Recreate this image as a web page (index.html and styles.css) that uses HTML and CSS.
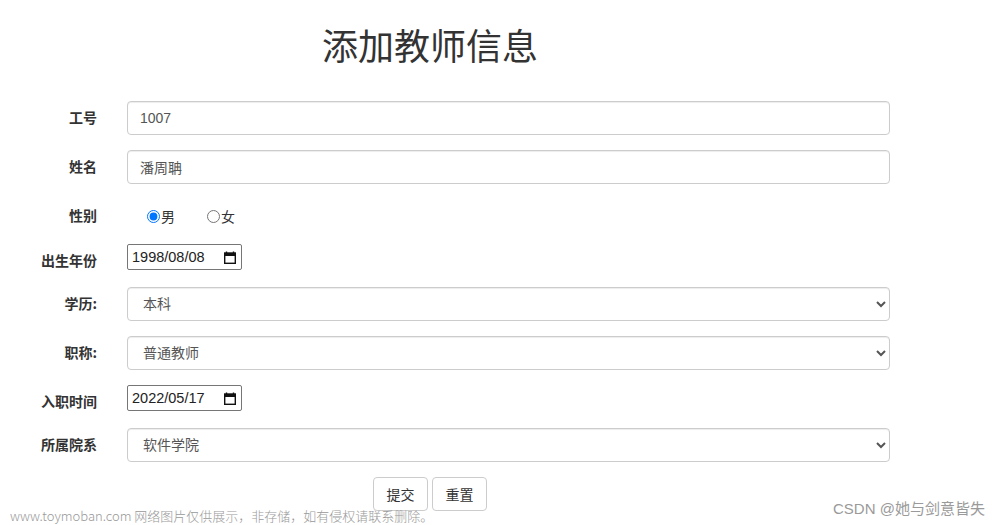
FILE: index.html
```html
<!DOCTYPE html>
<html lang="zh">
<head>
<meta charset="utf-8">
<title>添加教师信息</title>
<link rel="stylesheet" href="styles.css">
</head>
<body>
<div class="page">
  <h1 class="title">添加教师信息</h1>
  <form class="form">
    <div class="row">
      <label class="label">工号</label>
      <div class="control"><input class="text-input" type="text" value="1007"></div>
    </div>
    <div class="row">
      <label class="label">姓名</label>
      <div class="control"><input class="text-input" type="text" value="潘周聃"></div>
    </div>
    <div class="row row-radio">
      <label class="label">性别</label>
      <div class="control radios">
        <label class="radio"><input type="radio" name="sex" checked>男</label>
        <label class="radio"><input type="radio" name="sex">女</label>
      </div>
    </div>
    <div class="row row-date">
      <label class="label">出生年份</label>
      <div class="control">
        <div class="date-box"><span class="date-text">1998/08/08</span>
          <svg class="cal" width="12" height="13" viewBox="0 0 12 13"><path d="M2.5 0.5v2M9.5 0.5v2" stroke="#111" stroke-width="1.4" fill="none"/><rect x="0.7" y="2" width="10.6" height="10.3" fill="none" stroke="#111" stroke-width="1.4"/><rect x="0.7" y="2" width="10.6" height="3" fill="#111"/></svg>
        </div>
      </div>
    </div>
    <div class="row">
      <label class="label">学历:</label>
      <div class="control"><select class="select"><option>本科</option></select></div>
    </div>
    <div class="row">
      <label class="label">职称:</label>
      <div class="control"><select class="select"><option>普通教师</option></select></div>
    </div>
    <div class="row row-date">
      <label class="label">入职时间</label>
      <div class="control">
        <div class="date-box"><span class="date-text">2022/05/17</span>
          <svg class="cal" width="12" height="13" viewBox="0 0 12 13"><path d="M2.5 0.5v2M9.5 0.5v2" stroke="#111" stroke-width="1.4" fill="none"/><rect x="0.7" y="2" width="10.6" height="10.3" fill="none" stroke="#111" stroke-width="1.4"/><rect x="0.7" y="2" width="10.6" height="3" fill="#111"/></svg>
        </div>
      </div>
    </div>
    <div class="row">
      <label class="label">所属院系</label>
      <div class="control"><select class="select"><option>软件学院</option></select></div>
    </div>
    <div class="actions">
      <button type="button" class="btn">提交</button>
      <button type="button" class="btn">重置</button>
    </div>
  </form>
</div>
<div class="watermark">www.toymoban.com 网络图片仅供展示，非存储，如有侵权请联系删除。</div>
<div class="credit">CSDN @她与剑意皆失</div>
</body>
</html>
```

FILE: styles.css
```css
html, body {
  margin: 0;
  padding: 0;
  background: #fff;
}
body {
  font-family: "Liberation Sans", "Noto Sans CJK SC", sans-serif;
  font-size: 14px;
  line-height: 20px;
  color: #333;
  width: 1000px;
  height: 525px;
  overflow: hidden;
  position: relative;
}
.page {
  width: 860px;
}
.title {
  margin: 24px 0 37px;
  font-family: "Noto Sans CJK SC", sans-serif;
  font-weight: 400;
  font-size: 36px;
  line-height: 40px;
  text-align: center;
  color: #333;
}
.form {
  margin: 0;
}
.row {
  display: flex;
  gap: 30px;
  margin-bottom: 15px;
}
.label {
  width: 97px;
  flex: none;
  text-align: right;
  font-weight: bold;
  padding-top: 6px;
  line-height: 20px;
  font-family: "Noto Sans CJK SC", sans-serif;
  font-size: 14px;
  color: #333;
}
.control {
  width: 763px;
  flex: none;
}
.text-input,
.select {
  display: block;
  box-sizing: border-box;
  width: 763px;
  height: 34px;
  padding: 6px 12px;
  font-family: "Liberation Sans", "Noto Sans CJK SC", sans-serif;
  font-size: 14px;
  line-height: 20px;
  color: #555;
  background: #fff;
  border: 1px solid #ccc;
  border-radius: 4px;
  box-shadow: inset 0 1px 1px rgba(0,0,0,0.075);
  margin: 0;
}
.select {
  padding: 6px 11px;
}
.row-radio {
  height: 30px;
}
.radios {
  display: flex;
  padding: 7px 0 0 20px;
  box-sizing: border-box;
  gap: 32px;
}
.radio {
  display: flex;
  align-items: center;
  height: 20px;
  font-family: "Noto Sans CJK SC", sans-serif;
  font-size: 14px;
  color: #333;
}
.radio input {
  width: 13px;
  height: 13px;
  margin: 0 1px 0 0;
}
.row-date {
  min-height: 28px;
}
.date-box {
  box-sizing: border-box;
  display: flex;
  align-items: center;
  justify-content: space-between;
  width: 115px;
  height: 26px;
  padding: 0 5px 0 4px;
  border: 1px solid #767676;
  border-radius: 2px;
  background: #fff;
}
.date-text {
  font-family: "Liberation Sans", sans-serif;
  font-size: 14.5px;
  line-height: 20px;
  color: #222;
}
.cal {
  display: block;
  flex: none;
}
.actions {
  display: flex;
  justify-content: center;
  gap: 4px;
}
.btn {
  box-sizing: border-box;
  width: 55px;
  height: 34px;
  padding: 6px 10px;
  font-family: "Noto Sans CJK SC", sans-serif;
  font-size: 14px;
  line-height: 20px;
  color: #333;
  background: #fff;
  border: 1px solid #ccc;
  border-radius: 4px;
}
.watermark {
  position: absolute;
  left: 10px;
  top: 507px;
  font-family: "Noto Sans CJK SC", sans-serif;
  font-weight: 300;
  font-size: 13px;
  line-height: 18px;
  color: #999;
  white-space: nowrap;
}
.credit {
  position: absolute;
  left: 833px;
  top: 499px;
  font-family: "Liberation Sans", "Noto Sans CJK SC", sans-serif;
  font-size: 15px;
  line-height: 20px;
  color: #9a9a9a;
  white-space: nowrap;
}
```
